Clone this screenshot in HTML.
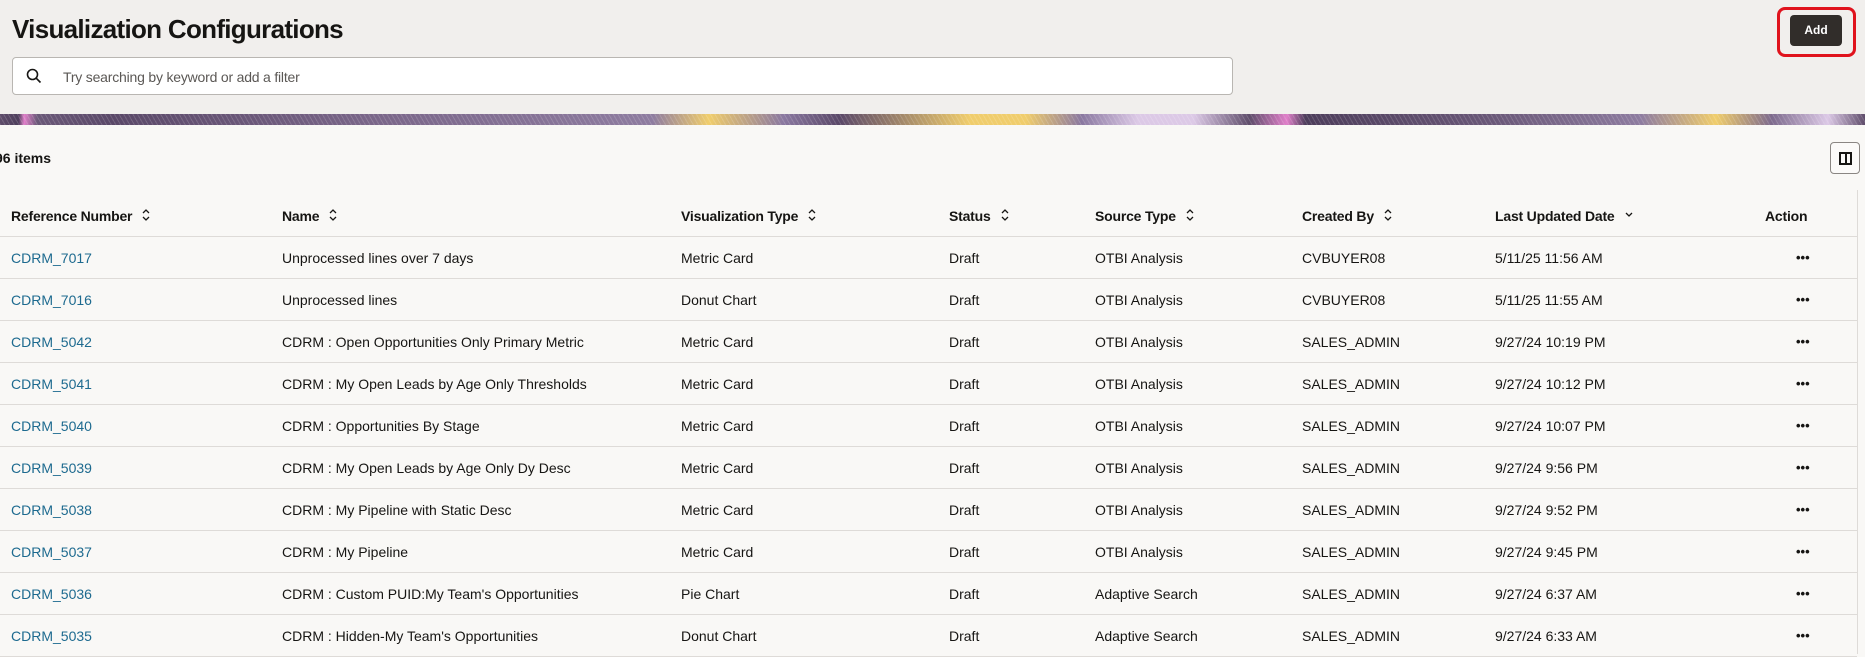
<!DOCTYPE html>
<html><head><meta charset="utf-8"><style>
*{box-sizing:border-box;margin:0;padding:0}
body{width:1865px;height:654px;overflow:hidden;background:#f9f8f6;font-family:"Liberation Sans",sans-serif;color:#161513;position:relative}
.hdr{position:absolute;left:0;top:0;width:1865px;height:114px;background:#f1efed}
h1{position:absolute;left:12px;top:14px;font-size:26px;font-weight:bold;letter-spacing:-0.7px}
.search{position:absolute;left:12px;top:57px;width:1221px;height:38px;background:#fff;border:1px solid #b9b6b2;border-radius:4px}
.search span{position:absolute;left:50px;top:11px;font-size:14px;color:#5b5855;letter-spacing:-0.2px}
.search svg{position:absolute;left:13px;top:10px}
.add{position:absolute;left:1790px;top:15px;width:52px;height:31px;background:#312d2a;color:#fff;border-radius:4px;font-size:12px;font-weight:bold;text-align:center;line-height:31px}
.red{position:absolute;left:1777px;top:7px;width:79px;height:50px;border:3px solid #e0131d;border-radius:8px}
.banner{position:absolute;left:0;top:114px;width:1865px;height:11px;
background:linear-gradient(90deg,#5f4d6b 0,#4d3d5b 1%,#e07fc9 1.3%,#6a5878 2%,#5a4868 6%,#7a6689 20%,#8e7ca0 35%,#f0cd6c 38%,#8a78a0 42%,#5a4868 45%,#f0cd6c 52%,#f0cd6c 55%,#8a78a0 58%,#dcc9e6 61%,#dcc9e6 64%,#5f4d6b 67%,#e07fc9 69%,#4d3d5b 70%,#6a5878 80%,#8e7ca0 88%,#f0cd6c 92%,#7d6a8d 95%,#dcc9e6 98%,#5f4d6b 100%)}
.banner:after{content:"";position:absolute;inset:0;background:repeating-linear-gradient(60deg,rgba(255,255,255,.15) 0 1px,transparent 1px 4px)}
.items{position:absolute;left:-5px;top:150px;font-size:14px;font-weight:bold}
.tog{position:absolute;left:1830px;top:142px;width:30px;height:32px;border:1px solid #8a8683;border-radius:4px;background:#fbfaf9}
.tog i{position:absolute;left:8px;top:9px;width:13px;height:13px;border:2px solid #161513}
.tog i:after{content:"";position:absolute;left:4px;top:0;width:2px;height:9px;background:#161513}
.vline{position:absolute;left:1857px;top:190px;width:1px;height:464px;background:#dedbd8}
.row{position:absolute;left:0;width:1857px;height:42px;border-bottom:1px solid #dedbd8;font-size:14px}
.row div{position:absolute;top:13px;white-space:nowrap}
.th div{font-weight:bold;font-size:14px;letter-spacing:-0.2px}
.lnk{color:#1d6a8f}
.s{display:inline-block;margin-left:9px;vertical-align:-1px}
.dots{font-weight:bold;letter-spacing:0px;font-size:13px}
</style></head><body>
<svg width="0" height="0" style="position:absolute"><defs><symbol id="so" viewBox="0 0 10 14"><path d="M2 5L5 2L8 5M2 9L5 12L8 9" fill="none" stroke="#161513" stroke-width="1.3"/></symbol><symbol id="dn" viewBox="0 0 10 14"><path d="M2 5L5 8L8 5" fill="none" stroke="#161513" stroke-width="1.3"/></symbol></defs></svg>
<div class="hdr">
<h1>Visualization Configurations</h1>
<div class="search"><svg width="16" height="16" viewBox="0 0 16 16"><circle cx="6.5" cy="6.5" r="5" fill="none" stroke="#161513" stroke-width="1.6"/><path d="M10.2 10.2L14.5 14.5" stroke="#161513" stroke-width="1.6"/></svg><span>Try searching by keyword or add a filter</span></div>
<div class="red"></div><div class="add">Add</div>
</div>
<div class="banner"></div>
<div class="items">96 items</div>
<div class="tog"><i></i></div>
<div class="vline"></div>
<div class="row th" style="top:195px"><div style="left:11px">Reference Number<svg class="s" width="10" height="14"><use href="#so"/></svg></div><div style="left:282px">Name<svg class="s" width="10" height="14"><use href="#so"/></svg></div><div style="left:681px">Visualization Type<svg class="s" width="10" height="14"><use href="#so"/></svg></div><div style="left:949px">Status<svg class="s" width="10" height="14"><use href="#so"/></svg></div><div style="left:1095px">Source Type<svg class="s" width="10" height="14"><use href="#so"/></svg></div><div style="left:1302px">Created By<svg class="s" width="10" height="14"><use href="#so"/></svg></div><div style="left:1495px">Last Updated Date<svg class="s" width="10" height="14"><use href="#dn"/></svg></div><div style="left:1765px">Action</div></div>
<div class="row" style="top:237px"><div class="lnk" style="left:11px">CDRM_7017</div><div style="left:282px">Unprocessed lines over 7 days</div><div style="left:681px">Metric Card</div><div style="left:949px">Draft</div><div style="left:1095px">OTBI Analysis</div><div style="left:1302px">CVBUYER08</div><div style="left:1495px">5/11/25 11:56 AM</div><div class="dots" style="left:1796px">&bull;&bull;&bull;</div></div>
<div class="row" style="top:279px"><div class="lnk" style="left:11px">CDRM_7016</div><div style="left:282px">Unprocessed lines</div><div style="left:681px">Donut Chart</div><div style="left:949px">Draft</div><div style="left:1095px">OTBI Analysis</div><div style="left:1302px">CVBUYER08</div><div style="left:1495px">5/11/25 11:55 AM</div><div class="dots" style="left:1796px">&bull;&bull;&bull;</div></div>
<div class="row" style="top:321px"><div class="lnk" style="left:11px">CDRM_5042</div><div style="left:282px">CDRM : Open Opportunities Only Primary Metric</div><div style="left:681px">Metric Card</div><div style="left:949px">Draft</div><div style="left:1095px">OTBI Analysis</div><div style="left:1302px">SALES_ADMIN</div><div style="left:1495px">9/27/24 10:19 PM</div><div class="dots" style="left:1796px">&bull;&bull;&bull;</div></div>
<div class="row" style="top:363px"><div class="lnk" style="left:11px">CDRM_5041</div><div style="left:282px">CDRM : My Open Leads by Age Only Thresholds</div><div style="left:681px">Metric Card</div><div style="left:949px">Draft</div><div style="left:1095px">OTBI Analysis</div><div style="left:1302px">SALES_ADMIN</div><div style="left:1495px">9/27/24 10:12 PM</div><div class="dots" style="left:1796px">&bull;&bull;&bull;</div></div>
<div class="row" style="top:405px"><div class="lnk" style="left:11px">CDRM_5040</div><div style="left:282px">CDRM : Opportunities By Stage</div><div style="left:681px">Metric Card</div><div style="left:949px">Draft</div><div style="left:1095px">OTBI Analysis</div><div style="left:1302px">SALES_ADMIN</div><div style="left:1495px">9/27/24 10:07 PM</div><div class="dots" style="left:1796px">&bull;&bull;&bull;</div></div>
<div class="row" style="top:447px"><div class="lnk" style="left:11px">CDRM_5039</div><div style="left:282px">CDRM : My Open Leads by Age Only Dy Desc</div><div style="left:681px">Metric Card</div><div style="left:949px">Draft</div><div style="left:1095px">OTBI Analysis</div><div style="left:1302px">SALES_ADMIN</div><div style="left:1495px">9/27/24 9:56 PM</div><div class="dots" style="left:1796px">&bull;&bull;&bull;</div></div>
<div class="row" style="top:489px"><div class="lnk" style="left:11px">CDRM_5038</div><div style="left:282px">CDRM : My Pipeline with Static Desc</div><div style="left:681px">Metric Card</div><div style="left:949px">Draft</div><div style="left:1095px">OTBI Analysis</div><div style="left:1302px">SALES_ADMIN</div><div style="left:1495px">9/27/24 9:52 PM</div><div class="dots" style="left:1796px">&bull;&bull;&bull;</div></div>
<div class="row" style="top:531px"><div class="lnk" style="left:11px">CDRM_5037</div><div style="left:282px">CDRM : My Pipeline</div><div style="left:681px">Metric Card</div><div style="left:949px">Draft</div><div style="left:1095px">OTBI Analysis</div><div style="left:1302px">SALES_ADMIN</div><div style="left:1495px">9/27/24 9:45 PM</div><div class="dots" style="left:1796px">&bull;&bull;&bull;</div></div>
<div class="row" style="top:573px"><div class="lnk" style="left:11px">CDRM_5036</div><div style="left:282px">CDRM : Custom PUID:My Team's Opportunities</div><div style="left:681px">Pie Chart</div><div style="left:949px">Draft</div><div style="left:1095px">Adaptive Search</div><div style="left:1302px">SALES_ADMIN</div><div style="left:1495px">9/27/24 6:37 AM</div><div class="dots" style="left:1796px">&bull;&bull;&bull;</div></div>
<div class="row" style="top:615px"><div class="lnk" style="left:11px">CDRM_5035</div><div style="left:282px">CDRM : Hidden-My Team's Opportunities</div><div style="left:681px">Donut Chart</div><div style="left:949px">Draft</div><div style="left:1095px">Adaptive Search</div><div style="left:1302px">SALES_ADMIN</div><div style="left:1495px">9/27/24 6:33 AM</div><div class="dots" style="left:1796px">&bull;&bull;&bull;</div></div>
</body></html>
